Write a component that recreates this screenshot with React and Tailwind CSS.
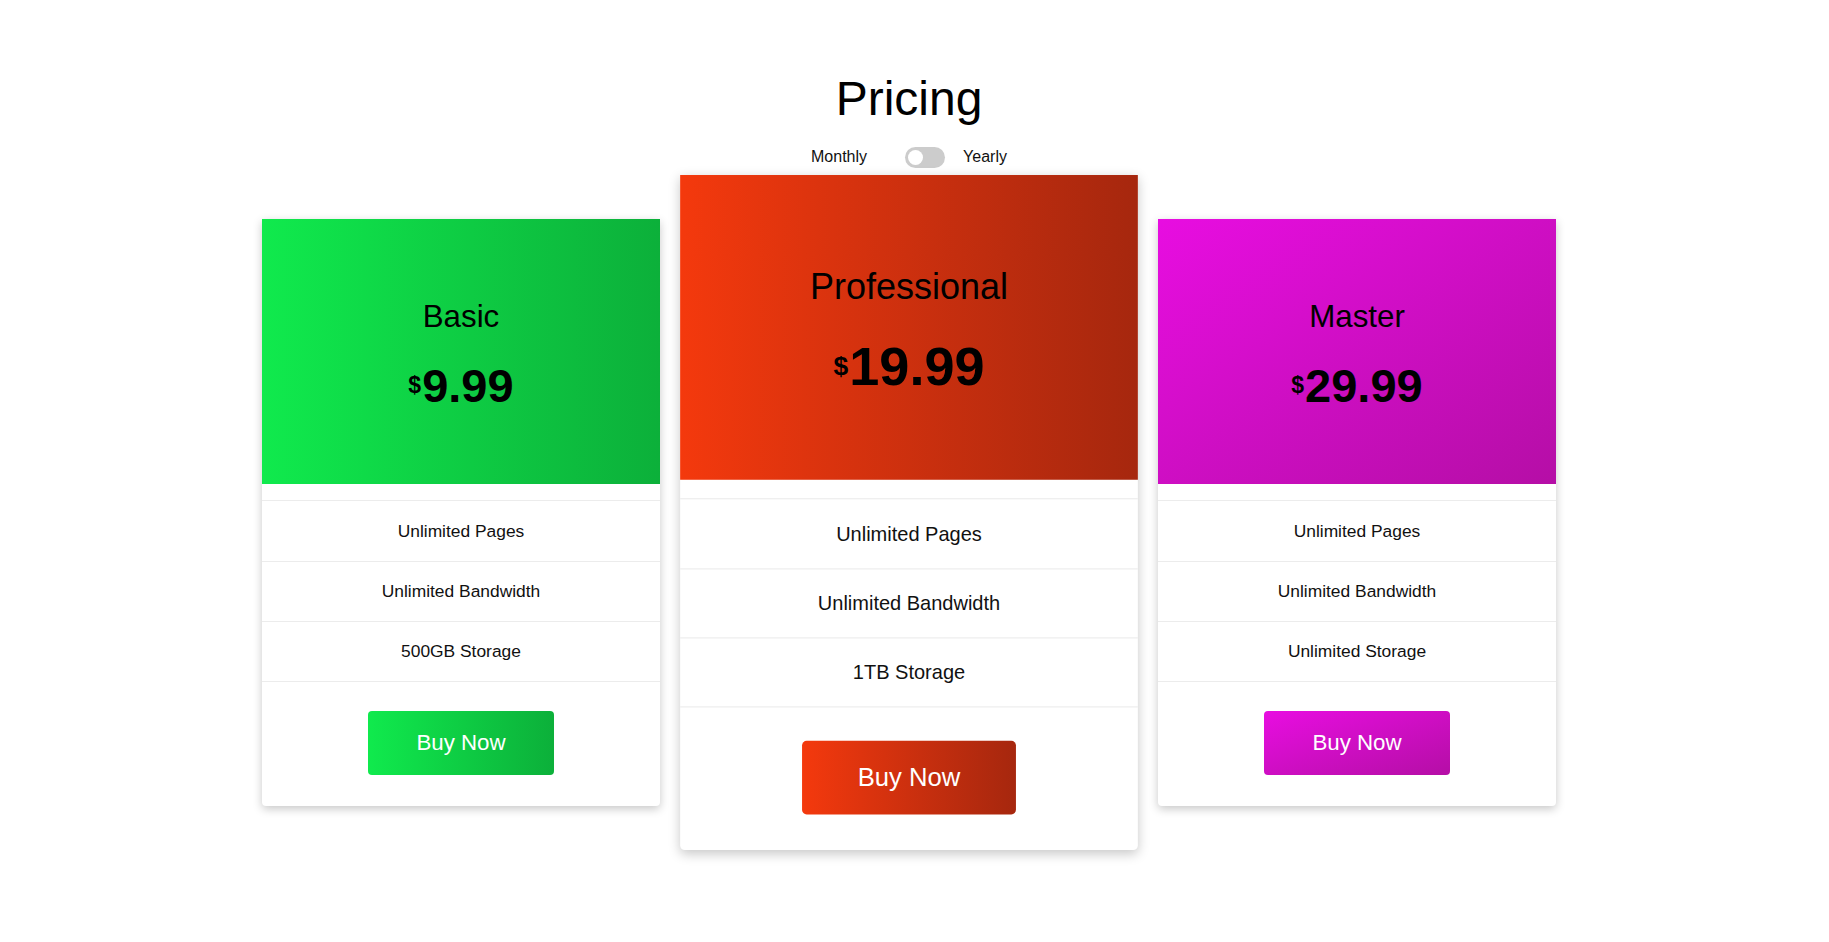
import React, { useState } from 'react';

const plans = [
  {
    name: 'Basic',
    price: '9.99',
    features: ['Unlimited Pages', 'Unlimited Bandwidth', '500GB Storage'],
    gradient: 'bg-linear-to-r from-[#10ea4d] to-[#0cb03a]',
    featured: false,
  },
  {
    name: 'Professional',
    price: '19.99',
    features: ['Unlimited Pages', 'Unlimited Bandwidth', '1TB Storage'],
    gradient: 'bg-linear-to-r from-[#f4390d] to-[#a6270e]',
    featured: true,
  },
  {
    name: 'Master',
    price: '29.99',
    features: ['Unlimited Pages', 'Unlimited Bandwidth', 'Unlimited Storage'],
    gradient: 'bg-linear-to-br from-[#e80de1] to-[#b50ea6]',
    featured: false,
  },
];

function PlanCard({ plan }) {
  return (
    <div
      className={
        'w-[398px] bg-white rounded-b-[4px] shadow-[0_3px_10px_rgba(0,0,0,0.22)] ' +
        (plan.featured ? 'scale-[1.15]' : '')
      }
    >
      <div className={'h-[265px] pt-[82px] flex flex-col items-center text-black ' + plan.gradient}>
        <h3 className="text-[31.3px] leading-none font-normal">{plan.name}</h3>
        <div className="mt-[30px] flex items-start leading-none font-bold">
          <span className="relative top-[12px] text-[23px] leading-none">$</span>
          <span className="text-[47px] leading-none ml-[1px]">{plan.price}</span>
        </div>
      </div>

      <ul className="mt-4">
        {plan.features.map((feature, i) => (
          <li
            key={feature}
            className={
              'h-[60.5px] flex items-center justify-center border-t border-[#ececec] text-[17.4px] text-[#111] ' +
              (i === plan.features.length - 1 ? 'border-b' : '')
            }
          >
            {feature}
          </li>
        ))}
      </ul>

      <div className="pt-[29px] pb-[31px] flex justify-center">
        <button
          type="button"
          className={'w-[186px] h-[64px] rounded-[4px] text-white text-[22.3px] ' + plan.gradient}
        >
          Buy Now
        </button>
      </div>
    </div>
  );
}

export default function App() {
  const [yearly, setYearly] = useState(false);

  return (
    <div className="min-h-screen bg-white pr-[11px] font-['Liberation_Sans',Arial,sans-serif]">
      <div className="pt-[75px] flex flex-col items-center">
        <h1 className="text-[48px] leading-none font-normal text-black">Pricing</h1>

        <div className="mt-[22px] flex items-center text-[16px] text-[#111]">
          <span className="mr-[38px]">Monthly</span>
          <button
            type="button"
            onClick={() => setYearly(!yearly)}
            className="w-[40px] h-[21px] rounded-full bg-[#cccccc] flex items-center px-[3px]"
          >
            <span
              className={
                'w-[15px] h-[15px] rounded-full bg-white transition-transform ' +
                (yearly ? 'translate-x-[19px]' : '')
              }
            />
          </button>
          <span className="ml-[18px]">Yearly</span>
        </div>
      </div>

      <div className="mt-[50px] flex justify-center gap-[50px]">
        {plans.map((plan) => (
          <PlanCard key={plan.name} plan={plan} />
        ))}
      </div>
    </div>
  );
}
